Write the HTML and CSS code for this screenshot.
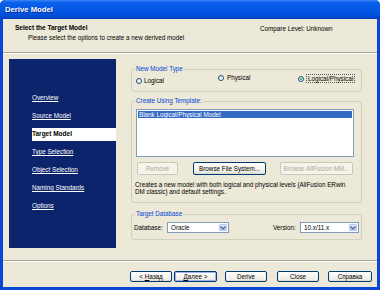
FILE: index.html
```html
<!DOCTYPE html>
<html>
<head>
<meta charset="utf-8">
<link rel="stylesheet" href="styles.css">
</head>
<body>
<div class="window">
  <div class="titlebar"><span class="title">Derive Model</span></div>
  <div class="client">
    <div class="header">
      <div class="head-text">
        <div class="head-title">Select the Target Model</div>
        <div class="head-sub">Please select the options to create a new derived model</div>
      </div>
      <div class="compare">Compare Level: Unknown</div>
    </div>
    <div class="main">
      <nav class="nav">
        <a class="nav-item">Overview</a>
        <a class="nav-item">Source Model</a>
        <a class="nav-item current"><span class="cur-bg">Target Model</span></a>
        <a class="nav-item">Type Selection</a>
        <a class="nav-item">Object Selection</a>
        <a class="nav-item">Naming Standards</a>
        <a class="nav-item">Options</a>
      </nav>
      <div class="pane">
        <fieldset class="group g-type">
          <legend>New Model Type</legend>
          <div class="radios">
            <label class="radio r-logical"><span class="dot"></span>Logical</label>
            <label class="radio r-physical"><span class="dot"></span>Physical</label>
            <label class="radio r-both"><span class="dot"><span class="pip"></span></span><span class="focus">Logical/Physical</span></label>
          </div>
        </fieldset>
        <fieldset class="group g-template">
          <legend>Create Using Template:</legend>
          <div class="listbox">
            <div class="list-item selected">Blank Logical/Physical Model</div>
          </div>
          <div class="tpl-buttons">
            <span class="btn disabled b-remove">Remove</span>
            <span class="btn b-browse">Browse File System...</span>
            <span class="btn disabled b-mm">Browse AllFusion MM...</span>
          </div>
          <div class="desc">Creates a new model with both logical and physical levels (AllFusion ERwin<br>DM classic) and default settings.</div>
        </fieldset>
        <fieldset class="group g-db">
          <legend>Target Database</legend>
          <div class="db-row">
            <span class="lbl l-db">Database:</span>
            <span class="combo c-db"><span class="combo-text">Oracle</span><span class="combo-btn"><svg width="6" height="4" viewBox="0 0 6 4"><path d="M0.5 0.5 L3 3 L5.5 0.5" fill="none" stroke="#4d6185" stroke-width="1.2"/></svg></span></span>
            <span class="lbl l-ver">Version:</span>
            <span class="combo c-ver"><span class="combo-text">10.x/11.x</span><span class="combo-btn"><svg width="6" height="4" viewBox="0 0 6 4"><path d="M0.5 0.5 L3 3 L5.5 0.5" fill="none" stroke="#4d6185" stroke-width="1.2"/></svg></span></span>
          </div>
        </fieldset>
      </div>
    </div>
    <div class="footer">
      <span class="btn fb f-back"><span>&lt; <u>Н</u>азад</span></span>
      <span class="btn fb f-next default"><span><u>Д</u>алее &gt;</span></span>
      <span class="btn fb f-derive">Derive</span>
      <span class="btn fb f-close">Close</span>
      <span class="btn fb f-help">Справка</span>
    </div>
  </div>
</div>
</body>
</html>
```

FILE: styles.css
```css
* { box-sizing: border-box; }
html, body { margin: 0; padding: 0; background: #ffffff; }
body {
  font-family: "Liberation Sans", Arial, sans-serif;
  font-size: 6.3px;
  color: #000;
}
.window {
  width: 380px;
  height: 290px;
  display: flex;
  flex-direction: column;
  background: #0a45d8;
  border-radius: 5px 5px 0 0;
  overflow: hidden;
}
.titlebar {
  height: 19px;
  flex: none;
  background: linear-gradient(#3d86f5 0%, #0b60ec 12%, #0458e6 45%, #0053e0 75%, #0045cc 92%, #003db6 100%);
  padding-left: 5px;
  display: flex;
  align-items: center;
}
.title {
  color: #fff;
  font-weight: bold;
  font-size: 7.7px;
  text-shadow: 1px 1px 0 #0a2a8a;
}
.client {
  flex: none;
  height: 268px;
  margin: 0 3px;
  background: #ece9d8;
  display: flex;
  flex-direction: column;
}
.header {
  height: 34px;
  flex: none;
  border-bottom: 1px solid #aca899;
  display: flex;
}
.head-text {
  width: 257px;
  padding: 5px 0 0 12px;
}
.head-title {
  font-weight: bold;
  font-size: 6.5px;
  line-height: 8px;
}
.head-sub {
  line-height: 8px;
  margin-top: 2px;
  margin-left: 13px;
  white-space: nowrap;
}
.compare {
  padding-top: 5px;
  line-height: 9px;
  white-space: nowrap;
}
.main {
  height: 207px;
  flex: none;
  border-top: 1px solid #fff;
  display: flex;
}
.nav {
  width: 107px;
  height: 189px;
  margin: 5px 0 0 6px;
  background: #0c246c;
  padding-top: 30px;
  display: flex;
  flex-direction: column;
}
.nav-item {
  height: 18px;
  line-height: 18px;
  padding-left: 23px;
  color: #fff;
  text-decoration: underline;
  white-space: nowrap;
}
.nav-item.current {
  text-decoration: none;
  display: flex;
  align-items: center;
}
.cur-bg {
  display: block;
  width: 100%;
  height: 13px;
  line-height: 11px;
  background: #fff;
  color: #000;
  font-weight: bold;
  font-size: 6.5px;
}
.pane {
  width: 231px;
  margin-left: 15px;
  padding-top: 11px;
}
.group {
  margin: 0;
  padding: 0 4px;
  border: 1px solid #d0d0bf;
  border-radius: 3px;
  min-width: 0;
}
.group legend {
  padding: 0 1px;
  margin-left: -1px;
  color: #0046d5;
  line-height: 8px;
}
.radios {
  height: 18px;
  display: flex;
  align-items: flex-start;
}
.radio {
  display: flex;
  align-items: center;
  line-height: 8px;
  white-space: nowrap;
}
.r-logical { width: 82px; margin-top: 4px; }
.r-physical { width: 80px; margin-top: 1px; }
.r-both { margin-top: 1px; }
.dot {
  width: 6px;
  height: 6px;
  border-radius: 50%;
  border: 1px solid #1c5180;
  background: linear-gradient(135deg, #e6e6df, #ffffff);
  margin-right: 2px;
  flex: none;
  display: flex;
  align-items: center;
  justify-content: center;
}
.r-physical .dot { margin-right: 3px; }
.pip {
  width: 2px;
  height: 2px;
  border-radius: 50%;
  background: #21a121;
}
.focus {
  border: 1px dotted #555;
  padding: 0 1px;
  line-height: 7px;
}
.g-template { margin-top: 5px; padding-bottom: 7px; }
.listbox {
  margin-top: 4px;
  width: 218px;
  height: 48px;
  border: 1px solid #7f9db9;
  background: #fff;
  padding: 1px 1px;
}
.list-item {
  height: 7px;
  line-height: 7px;
  padding-left: 1px;
}
.list-item.selected { background: #316ac5; color: #fff; }
.tpl-buttons {
  margin-top: 5px;
  display: flex;
}
.btn {
  height: 13px;
  display: flex;
  align-items: center;
  justify-content: center;
  border: 1px solid #003c74;
  border-radius: 2px;
  background: linear-gradient(#ffffff 0%, #f7f6f1 40%, #ecebe4 85%, #d8d5c9 100%);
  white-space: nowrap;
  flex: none;
}
.btn.disabled {
  border-color: #c9c7ba;
  color: #aca899;
  background: #f5f4ea;
}
.b-remove { width: 41px; margin-left: 1px; }
.b-browse { width: 73px; margin-left: 15px; }
.b-mm { width: 73px; margin-left: 14px; }
.desc {
  margin-top: 6px;
  margin-left: -1px;
  line-height: 7px;
  white-space: nowrap;
}
.g-db { margin-top: 7px; padding-bottom: 6px; }
.db-row {
  margin-top: 4px;
  height: 11px;
  display: flex;
  align-items: center;
}
.lbl { white-space: nowrap; flex: none; }
.l-db { width: 33px; margin-left: -2px; }
.l-ver { width: 27px; margin-left: 44px; }
.combo {
  height: 11px;
  border: 1px solid #7f9db9;
  background: #fff;
  display: flex;
  align-items: center;
  flex: none;
  padding: 1px;
}
.c-db { width: 62px; }
.c-ver { width: 59px; }
.combo-text { flex: 1; padding-left: 2px; }
.combo-btn {
  width: 8px;
  height: 100%;
  border: 1px solid #b4c8f6;
  border-radius: 1px;
  background: linear-gradient(#dde8fd, #b9cdf9);
  display: flex;
  align-items: center;
  justify-content: center;
}
.footer {
  flex: 1;
  border-top: 1px solid #aca899;
  box-shadow: inset 0 1px 0 #fff;
  padding: 10px 0 0 127px;
  display: flex;
  align-items: flex-start;
}
.fb { height: 11px; }
.fb u { text-decoration: underline; }
.f-back { width: 42px; }
.f-next { width: 43px; margin-left: 2px; }
.f-derive { width: 42px; margin-left: 8px; }
.f-close { width: 42px; margin-left: 10px; }
.f-help { width: 44px; margin-left: 9px; }
.btn.default { box-shadow: inset 0 0 0 1px #9db6f2; }
```
